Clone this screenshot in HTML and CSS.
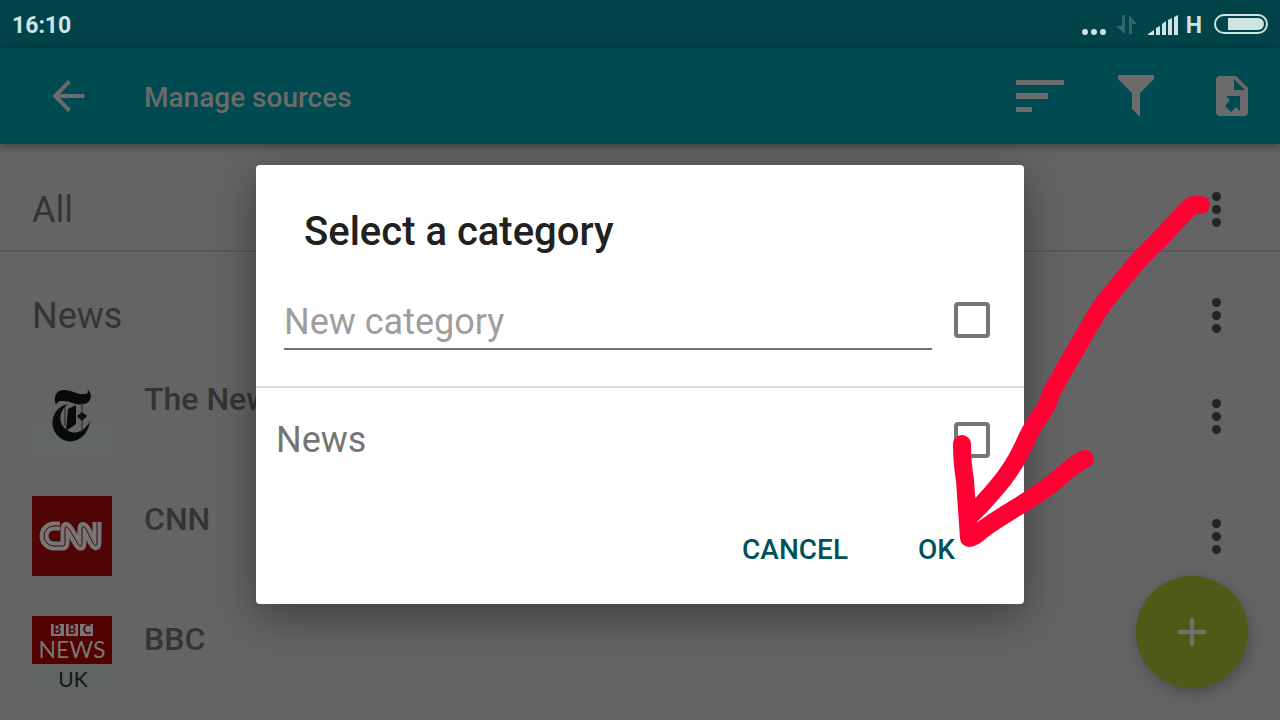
FILE: index.html
```html
<!DOCTYPE html>
<html lang="en">
<head>
<meta charset="utf-8">
<meta name="viewport" content="width=device-width, initial-scale=1">
<title>Manage sources</title>
<link rel="stylesheet" href="styles.css">
</head>
<body>
<div class="screen">
  <div class="status-bar">
    <span class="clock">16:10</span>
    <div class="status-icons">
      <svg width="24" height="24" viewBox="0 0 24 24" aria-hidden="true"><circle cx="3" cy="19" r="3"/><circle cx="12" cy="19" r="3"/><circle cx="21" cy="19" r="3"/></svg>
      <svg class="faint" width="22" height="20" viewBox="0 0 22 20" aria-hidden="true"><path d="M6 0h3v19L0 11h6zM13 0l8 9h-5v10h-3z"/></svg>
      <svg width="30" height="20" viewBox="0 0 30 20" aria-hidden="true"><path d="M0 20v-1l6-4v5zM8 20v-7l4-2v9zM14 20V9l4-3v14zM20 20V5l4-2v17zM26 20V2l4-2v20z"/></svg>
      <span class="network">H</span>
      <svg class="battery" width="54" height="20" viewBox="0 0 54 20" aria-hidden="true"><rect x="1" y="1" width="52" height="18" rx="9" fill="none" stroke="#cfe3e2" stroke-width="2"/><path d="M14 4h30a6 6 0 0 1 0 12H14z"/></svg>
    </div>
  </div>

  <header class="app-bar">
    <button class="icon-button" type="button" aria-label="Back"><svg width="48" height="48" viewBox="0 0 24 24"><path d="M20.200 11H8l5.400-5.600L12 4l-7.800 8 7.800 8 1.400-1.400L8 13h12.200z"/></svg></button>
    <h1 class="app-title">Manage sources</h1>
    <div class="actions">
      <button class="icon-button" type="button" aria-label="Sort"><svg width="48" height="32" viewBox="0 0 48 32"><path d="M0 0h48v5H0zM0 13h32v6H0zM0 27h16v5H0z"/></svg></button>
      <button class="icon-button" type="button" aria-label="Filter"><svg width="36" height="42" viewBox="0 0 36 42"><path d="M0 0h36v4L22 18v24l-8-8V18L0 4z"/></svg></button>
      <button class="icon-button export" type="button" aria-label="Export"><svg width="32" height="40" viewBox="0 0 32 40"><path fill-rule="evenodd" d="M4 0h16l12 12v24a4 4 0 0 1-4 4H4a4 4 0 0 1-4-4V4a4 4 0 0 1 4-4zM18 3v11h11zM10 20l4 4-5 6 6 6 5-5 4 4V20z"/></svg></button>
    </div>
  </header>

  <main class="content">
    <section class="group divided">
      <h2>All</h2>
      <button class="more" type="button" aria-label="All options"><i></i><i></i><i></i></button>
    </section>
    <section class="group">
      <h2>News</h2>
      <button class="more" type="button" aria-label="News options"><i></i><i></i><i></i></button>
    </section>
    <ul class="sources">
      <li class="source">
        <svg class="logo" viewBox="0 0 80 80" aria-hidden="true">
          <rect y="50" width="80" height="30" fill="#626664"/>
          <path fill="#090b09" d="M24 29c-3-8 0-15 8-15 8 0 13 5 20 4 4 0 5-2 3-5 6 4 5 14-3 15-8 2-15-4-22-3-4 0-5 2-6 4z"/>
          <path fill="#090b09" d="M36 28c-15 3-20 20-11 31 10 12 30 7 33-14-5 10-15 15-23 9-9-6-9-18 1-26z"/>
          <path fill="#090b09" d="M36 33l8-4v19l-10 7zM45 40l5-4 5 4-5 5z"/>
          <path fill="none" stroke="#202520" stroke-width="1" d="M50 26v30M33 31v19"/>
        </svg>
        <h3>The New York Times</h3>
        <button class="more" type="button" aria-label="The New York Times options"><i></i><i></i><i></i></button>
      </li>
      <li class="source">
        <svg class="logo" viewBox="0 0 80 80" aria-hidden="true">
          <rect width="80" height="80" fill="#500606"/>
          <g fill="none" stroke-linejoin="round">
            <path stroke="#777" stroke-width="9" d="M28 30H22a10 10 0 0 0 0 20h9q2 0 2-3V33q0-5 4 0l9 15q4 5 4-1V33q0-5 4 0l7 14q4 6 4-1V26"/>
            <path stroke="#500606" stroke-width="1" d="M28 30H22a10 10 0 0 0 0 20h9q2 0 2-3V33q0-5 4 0l9 15q4 5 4-1V33q0-5 4 0l7 14q4 6 4-1V26"/>
          </g>
        </svg>
        <h3>CNN</h3>
        <button class="more" type="button" aria-label="CNN options"><i></i><i></i><i></i></button>
      </li>
      <li class="source">
        <svg class="logo" viewBox="0 0 80 80" role="img" aria-label="BBC News UK">
          <rect width="80" height="48" fill="#520000"/><rect y="48" width="80" height="32" fill="#606562"/>
          <path fill="#777" d="M19 8h13v12H19zM34 8h12v12H34zM48 8h13v12H48z"/>
          <g class="logo-text" text-anchor="middle">
            <g class="logo-bbc"><text x="25" y="18">B</text><text x="40" y="18">B</text><text x="55" y="18">C</text></g>
            <text class="logo-news" x="40" y="42">NEWS</text>
            <text class="logo-uk" x="41" y="71">UK</text>
          </g>
        </svg>
        <h3>BBC</h3>
      </li>
    </ul>
  </main>

  <button class="fab" type="button" aria-label="Add source"><svg width="28" height="28" viewBox="0 0 28 28"><path d="M12 0h4v12h12v4H16v12h-4V16H0v-4h12z"/></svg></button>

  <div class="overlay">
    <form class="dialog" role="dialog" aria-labelledby="dialog-title">
      <h2 class="dialog-title" id="dialog-title">Select a category</h2>
      <div class="new-row">
        <input class="new-input" type="text" placeholder="New category" aria-label="New category">
        <input class="check" type="checkbox" aria-label="Use new category">
      </div>
      <label class="category-row"><span>News</span><input class="check" type="checkbox"></label>
      <div class="dialog-actions">
        <button type="button">CANCEL</button>
        <button type="button">OK</button>
      </div>
    </form>
  </div>

  <svg class="arrow" width="160" height="370" viewBox="940 185 160 370" aria-hidden="true">
    <path d="M1201 205H1197Q1192 204 1187 210L1157 242Q1142 256 1132 268L1103 304Q1098 311 1090 325L1064 370L1051 393Q1048 406 1040 416Q1030 430 1023 447Q1012 470 997 487Q982 505 968 518"/>
    <path d="M962 444Q962 463 965 480L969 538Q974 538 982 530C1002 515 1028 502 1053 483Q1074 464 1085 459"/>
  </svg>
</div>
</body>
</html>
```

FILE: styles.css
```css
* { box-sizing: border-box; }
body { margin: 0; background: #646464; font-family: Roboto, "Noto Sans", sans-serif; }
button, input { font: inherit; }
button { padding: 0; border: 0; background: none; color: inherit; cursor: pointer; }
h1, h2, h3, ul { margin: 0; padding: 0; }
svg { display: block; fill: currentColor; }

.screen { position: relative; height: 100vh; overflow: hidden; }

.status-bar { display: flex; justify-content: space-between; align-items: center; height: 48px; padding: 2px 12px 0; background: #00444a; color: #cfe3e2; font-size: 23px; font-weight: 700; }
.status-icons { display: flex; align-items: center; gap: 10px; }
.network { margin-left: -2px; }
.battery { margin: 0 0 2px 2px; }
.faint { color: #2d686d; }

.app-bar { position: relative; display: flex; align-items: center; height: 96px; padding: 0 32px 0 44px; background: #004a52; color: #6b6b6b; box-shadow: 0 2px 8px rgba(0, 0, 0, 0.4); }
.app-title { flex: 1; padding: 2px 0 0 52px; font-size: 28px; font-weight: 500; }
.actions { display: flex; align-items: center; gap: 54px; }
.export { margin-left: 8px; }

.group { display: flex; justify-content: space-between; align-items: center; height: 104px; padding: 22px 52px 0 32px; color: #343434; }
.group h2 { padding-top: 2px; font-size: 36px; font-weight: 400; }
.divided { height: 108px; padding-top: 24px; border-bottom: 2px solid #585858; }
.more { display: flex; flex-direction: column; align-items: center; gap: 4px; width: 23px; }
.more i { width: 9px; height: 9px; border-radius: 50%; background: #242424; }

.sources { list-style: none; }
.source { display: flex; align-items: center; height: 120px; padding: 0 52px 0 32px; gap: 32px; }
.source h3 { flex: 1; align-self: flex-start; padding-top: 24px; color: #343434; font-size: 32px; line-height: 38px; font-weight: 500; }
.logo { width: 80px; height: 80px; }
.logo-text { font-family: Lato, sans-serif; fill: #777; }
.logo-bbc { font-size: 13px; font-weight: 700; fill: #520000; }
.logo-news { font-size: 23px; }
.logo-uk { font-size: 21px; fill: #151515; }

.fab { position: absolute; right: 32px; bottom: 32px; display: grid; place-items: center; width: 112px; height: 112px; border-radius: 50%; background: #515916; color: #707070; box-shadow: 2px 5px 14px rgba(0, 0, 0, 0.25); }

.overlay { position: absolute; inset: 48px 0 0; display: grid; place-items: center; }
.dialog { width: 60%; border-radius: 4px; background: #fff; box-shadow: 0 12px 44px rgba(0, 0, 0, 0.38); }
.dialog-title { padding: 42px 48px 29px; color: #212121; font-size: 40px; line-height: 50px; font-weight: 500; }
.new-row { display: flex; align-items: flex-start; gap: 22px; padding: 10px 34px 36px 28px; border-bottom: 2px solid #dedede; }
.new-input { flex: 1; min-width: 0; height: 54px; padding: 0; border: 0; border-bottom: 2px solid #737373; border-radius: 0; outline: 0; background: none; color: #212121; font-size: 36px; }
.new-input::placeholder { color: #9e9e9e; opacity: 1; }
.check { flex: none; appearance: none; width: 36px; height: 36px; margin: 0; border: 4px solid #757575; border-radius: 4px; background: #fff; }
.new-row .check { margin-top: 6px; }
.category-row { display: flex; justify-content: space-between; align-items: center; height: 104px; padding: 0 34px 0 20px; color: #757575; font-size: 36px; }
.dialog-actions { display: flex; justify-content: flex-end; gap: 70px; padding: 34px 69px 30px; color: #00525a; font-size: 28px; font-weight: 500; line-height: 48px; }

.arrow { position: absolute; top: 185px; left: 940px; overflow: visible; fill: none; stroke: #ff0033; stroke-width: 18; stroke-linecap: round; stroke-linejoin: round; pointer-events: none; }
```
